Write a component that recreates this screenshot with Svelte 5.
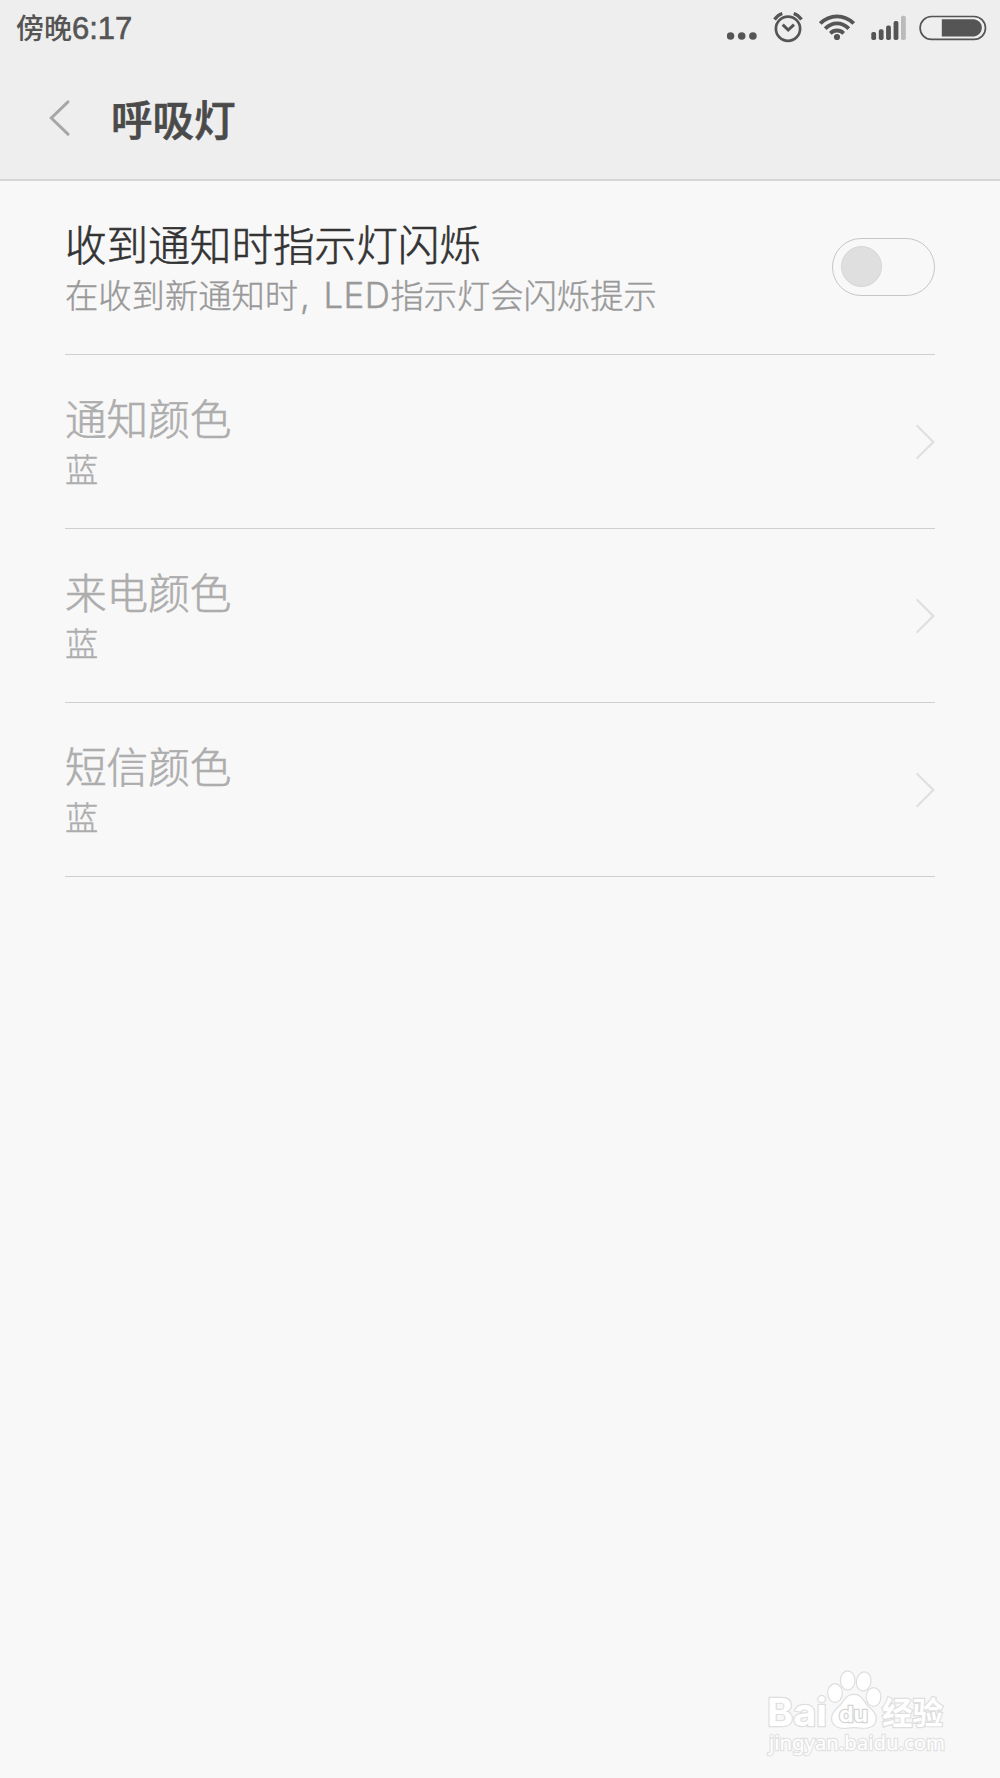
<script lang="ts">
  type ColorRow = { title: string; value: string };

  const rows: ColorRow[] = [
    { title: '通知颜色', value: '蓝' },
    { title: '来电颜色', value: '蓝' },
    { title: '短信颜色', value: '蓝' },
  ];

  let enabled = $state(false);

  function toggle() {
    enabled = !enabled;
  }
</script>

<div class="screen">
  <header>
    <div class="status-bar">
      <span class="time">傍晚<span class="clock">6:17</span></span>
      <div class="status-icons">
        <svg class="more" width="30" height="40" viewBox="0 0 30 40">
          <circle cx="3.5" cy="32" r="3.8" />
          <circle cx="14.7" cy="32" r="3.8" />
          <circle cx="25.9" cy="32" r="3.8" />
        </svg>
        <svg class="alarm" width="30" height="40" viewBox="0 0 30 40">
          <g fill="none" stroke="#555" stroke-width="2.7">
            <circle cx="15" cy="24.7" r="12.1" />
            <path d="M1.5 15.5Q4.5 11 9.3 9.4M28.5 15.5Q25.5 11 20.7 9.4" stroke-width="3.2" />
            <path d="M9.7 20.6L15.2 26L21 20.6" stroke-width="3" />
          </g>
        </svg>
        <svg class="wifi" width="36" height="40" viewBox="0 0 36 40">
          <g fill="none" stroke="#555" stroke-width="3.8">
            <path d="M1.3 19.5Q8.5 12.4 18 12.4T34.7 19.5" />
            <path d="M6.2 24.7Q11.5 19.4 18 19.4T29.8 24.7" />
            <path d="M11.3 29.3Q14.3 26.5 18 26.5T24.7 29.3" />
          </g>
          <circle cx="18" cy="33" r="3.1" />
        </svg>
        <svg class="signal" width="36" height="40" viewBox="0 0 36 40">
          <rect x="0.3" y="28" width="4.8" height="8" rx="1.8" />
          <rect x="7.8" y="25.3" width="4.8" height="10.7" rx="1.8" />
          <rect x="15.1" y="21.6" width="4.8" height="14.4" rx="1.8" />
          <rect x="22.6" y="17" width="4.8" height="19" rx="1.8" />
          <rect x="30" y="11.7" width="4.8" height="24.3" rx="1.8" fill="#bababa" />
        </svg>
        <svg class="battery" width="68" height="40" viewBox="0 0 68 40">
          <rect x="1.1" y="12.5" width="65.4" height="22.9" rx="11.4" fill="none" stroke="#555" stroke-width="1.7" />
          <path d="M22.8 15.3H55.2A8.6 8.6 0 0 1 55.2 32.4H22.8Z" />
        </svg>
      </div>
    </div>
    <div class="title-bar">
      <svg class="back" width="22" height="38" viewBox="0 0 22 38">
        <path d="M19 2.8L2.3 19L19 35.2" fill="none" stroke="#a7a7a7" stroke-width="3" stroke-linecap="round" />
      </svg>
      <h1>呼吸灯</h1>
    </div>
  </header>

  <main>
    <div class="row">
      <div class="text">
        <span class="title">收到通知时指示灯闪烁</span>
        <span class="desc">在收到新通知时<span class="latin">, LED</span>指示灯会闪烁提示</span>
      </div>
      <button class="switch" class:on={enabled} role="switch" aria-checked={enabled} aria-label="收到通知时指示灯闪烁" onclick={toggle}>
        <span class="thumb"></span>
      </button>
    </div>
    {#each rows as row}
      <div class="row" class:disabled={!enabled}>
        <div class="text">
          <span class="title">{row.title}</span>
          <span class="desc">{row.value}</span>
        </div>
        <svg class="arrow" width="20" height="38" viewBox="0 0 20 38">
          <path d="M2.3 3L18.3 19L2.3 35" fill="none" stroke="#e0e0e0" stroke-width="2.4" stroke-linecap="round" />
        </svg>
      </div>
    {/each}
  </main>

  <svg class="watermark" width="190" height="96" viewBox="0 0 190 96">
    <g class="mark">
      <text class="bai" x="5" y="61.5" font-weight="700" textLength="60" lengthAdjust="spacingAndGlyphs">Bai</text>
      <ellipse cx="73" cy="29" rx="6.8" ry="8.7" />
      <ellipse cx="85.7" cy="16.5" rx="6.7" ry="9" />
      <ellipse cx="101.7" cy="17.5" rx="6.7" ry="9" transform="rotate(10 101.7 17.5)" />
      <ellipse cx="111.5" cy="33" rx="6.8" ry="8.7" />
      <path d="M92 31C100 31 101 38 106 43C112 48 115 52 113 58C111 64 104 64 98 63.5Q92 62.5 86 63.5C79 64.5 72 63 70.5 57C69 50 74 46 79 41C83 36 85 31 92 31Z" />
      <text class="du" x="77" y="58" font-size="22" font-weight="700" textLength="29" lengthAdjust="spacingAndGlyphs">du</text>
      <text class="cjk" x="120" y="60" font-size="31" font-weight="700" textLength="61" lengthAdjust="spacingAndGlyphs">经验</text>
      <text class="url" x="7" y="86" font-size="20" textLength="176" lengthAdjust="spacingAndGlyphs">jingyan.baidu.com</text>
    </g>
  </svg>
</div>

<style>
  :global(body) {
    margin: 0;
    background: #f8f8f8;
  }

  .screen {
    position: relative;
    width: 1000px;
    height: 1778px;
    overflow: hidden;
    background: #f8f8f8;
    color: #333;
    font-family: "Noto Sans CJK SC", sans-serif;
  }

  header {
    box-sizing: border-box;
    height: 181px;
    background: #eee;
    border-bottom: 2px solid #d6d6d6;
  }

  .status-bar {
    display: flex;
    align-items: center;
    justify-content: space-between;
    height: 56px;
    padding: 0 13px 0 16px;
  }

  .time {
    padding-bottom: 1px;
    color: #555;
    font-size: 28px;
    font-weight: 500;
    line-height: 40px;
    white-space: nowrap;
  }

  .clock {
    font-family: "Liberation Sans", sans-serif;
    font-size: 31px;
    font-weight: 400;
    -webkit-text-stroke: 0.6px #555;
  }

  .status-icons {
    display: flex;
    height: 48px;
    fill: #555;
  }

  .alarm {
    margin-left: 16px;
  }

  .wifi {
    margin-left: 16px;
  }

  .signal {
    margin-left: 16px;
  }

  .battery {
    margin-left: 12px;
  }

  .title-bar {
    display: flex;
    align-items: center;
    height: 124px;
    padding-left: 49px;
  }

  h1 {
    margin: 0 0 0 40px;
    color: #4a4a4a;
    font-size: 41.5px;
    font-weight: 500;
    line-height: 60px;
    -webkit-text-stroke: 0.7px #4a4a4a;
  }

  main {
    padding: 0 65px;
  }

  .row {
    display: flex;
    box-sizing: border-box;
    align-items: center;
    justify-content: space-between;
    height: 174px;
    padding-bottom: 2px;
    border-bottom: 1px solid #d0d0d0;
  }

  .text {
    display: flex;
    flex-direction: column;
    gap: 5px;
    padding-bottom: 1px;
  }

  .title {
    font-size: 41.6px;
    font-weight: 300;
    line-height: 50px;
    -webkit-text-stroke: 0.6px;
  }

  .desc {
    color: #999;
    font-size: 33.3px;
    font-weight: 300;
    line-height: 42px;
    white-space: nowrap;
    -webkit-text-stroke: 0.4px;
  }

  .disabled .title,
  .disabled .desc {
    color: #adadad;
  }

  .latin {
    margin-left: 2px;
    font-family: Inter, sans-serif;
    font-size: 35px;
    line-height: 1;
    letter-spacing: 0.4px;
    word-spacing: 2.8px;
  }

  .switch {
    display: flex;
    box-sizing: border-box;
    align-items: center;
    width: 103px;
    height: 58px;
    padding: 0 8px;
    border: 1px solid #c6c6c6;
    border-radius: 29px;
    background: none;
  }

  .switch.on {
    justify-content: flex-end;
  }

  .thumb {
    box-sizing: border-box;
    width: 41px;
    height: 41px;
    border: 1px solid #d6d6d6;
    border-radius: 50%;
    background: #dfdfdf;
  }

  .arrow {
    margin-top: 2px;
  }

  .watermark {
    position: absolute;
    right: 48px;
    bottom: 18px;
  }

  .mark {
    fill: #fff;
    stroke: #dedede;
    stroke-width: 2.4px;
    paint-order: stroke;
    font-family: "Liberation Sans", sans-serif;
  }

  .bai {
    font-family: Inter, sans-serif;
    font-size: 38px;
  }

  .du {
    font-family: Inter, sans-serif;
    stroke: #d4d4d4;
  }

  .cjk {
    font-family: "Noto Sans CJK SC", sans-serif;
  }

  .url {
    font-family: "Noto Sans", sans-serif;
    stroke: #e2e2e2;
  }
</style>
